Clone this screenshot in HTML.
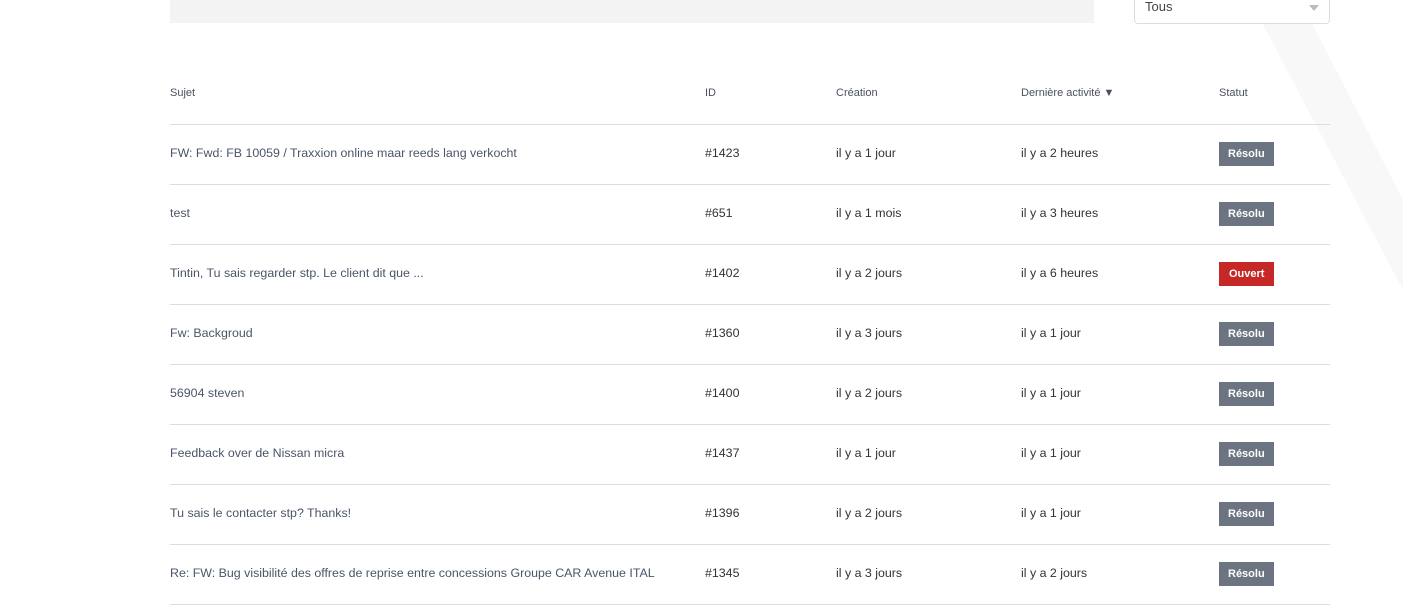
<!DOCTYPE html>
<html><head><meta charset="utf-8"><style>
body{margin:0;width:1403px;height:574px;overflow:hidden;background:#fff;font-family:"Liberation Sans",sans-serif;position:relative}
.bg{position:absolute;left:0;top:0}
.search{position:absolute;left:170px;top:-5px;width:924px;height:28px;background:#f3f3f3}
.sel{position:absolute;left:1134px;top:-8px;width:194px;height:30px;border:1px solid #ddd;border-radius:4px;background:#fff;font-size:13px;color:#444}
.sel span{position:absolute;left:10px;top:6px}
.sel i{position:absolute;right:10px;top:12px;border-left:5px solid transparent;border-right:5px solid transparent;border-top:6px solid #bbb}
.t{position:absolute;left:170px;width:1160px}
.h,.r{position:relative;height:60px;border-bottom:1px solid #ddd;box-sizing:border-box}
.h{height:124px;position:absolute;top:-124px;width:1160px}
.h div{position:absolute;top:87px;font-size:11px;color:#4a5060}
.r div{position:absolute;top:21px;font-size:12.4px;color:#333;white-space:nowrap}
.r .s{color:#4a5568}
.b{display:inline-block;background:#6b7480;color:#fff;font-weight:bold;font-size:11px;padding:0 9px;height:24px;line-height:24px;margin-top:-4px}
.o{background:#c62828;padding:0 10px}
</style></head><body>
<svg class="bg" width="1403" height="574"><polygon points="1250,0 1300,0 1403,200 1403,290" fill="#f8f8f8"/></svg>
<div class="search"></div>
<div class="sel"><span>Tous</span><i></i></div>
<div class="t" style="top:125px">
<div class="h" style="top:-125px;height:125px"><div style="left:0">Sujet</div><div style="left:535px">ID</div><div style="left:666px">Création</div><div style="left:851px">Dernière activité ▼</div><div style="left:1049px">Statut</div></div>
<div class="r"><div class="s" style="left:0">FW: Fwd: FB 10059 / Traxxion online maar reeds lang verkocht</div><div style="left:535px">#1423</div><div style="left:666px">il y a 1 jour</div><div style="left:851px">il y a 2 heures</div><div style="left:1049px"><span class="b">Résolu</span></div></div>
<div class="r"><div class="s" style="left:0">test</div><div style="left:535px">#651</div><div style="left:666px">il y a 1 mois</div><div style="left:851px">il y a 3 heures</div><div style="left:1049px"><span class="b">Résolu</span></div></div>
<div class="r"><div class="s" style="left:0">Tintin, Tu sais regarder stp. Le client dit que ...</div><div style="left:535px">#1402</div><div style="left:666px">il y a 2 jours</div><div style="left:851px">il y a 6 heures</div><div style="left:1049px"><span class="b o">Ouvert</span></div></div>
<div class="r"><div class="s" style="left:0">Fw: Backgroud</div><div style="left:535px">#1360</div><div style="left:666px">il y a 3 jours</div><div style="left:851px">il y a 1 jour</div><div style="left:1049px"><span class="b">Résolu</span></div></div>
<div class="r"><div class="s" style="left:0">56904 steven</div><div style="left:535px">#1400</div><div style="left:666px">il y a 2 jours</div><div style="left:851px">il y a 1 jour</div><div style="left:1049px"><span class="b">Résolu</span></div></div>
<div class="r"><div class="s" style="left:0">Feedback over de Nissan micra</div><div style="left:535px">#1437</div><div style="left:666px">il y a 1 jour</div><div style="left:851px">il y a 1 jour</div><div style="left:1049px"><span class="b">Résolu</span></div></div>
<div class="r"><div class="s" style="left:0">Tu sais le contacter stp? Thanks!</div><div style="left:535px">#1396</div><div style="left:666px">il y a 2 jours</div><div style="left:851px">il y a 1 jour</div><div style="left:1049px"><span class="b">Résolu</span></div></div>
<div class="r"><div class="s" style="left:0">Re: FW: Bug visibilité des offres de reprise entre concessions Groupe CAR Avenue ITAL</div><div style="left:535px">#1345</div><div style="left:666px">il y a 3 jours</div><div style="left:851px">il y a 2 jours</div><div style="left:1049px"><span class="b">Résolu</span></div></div>
</div>
</body></html>
